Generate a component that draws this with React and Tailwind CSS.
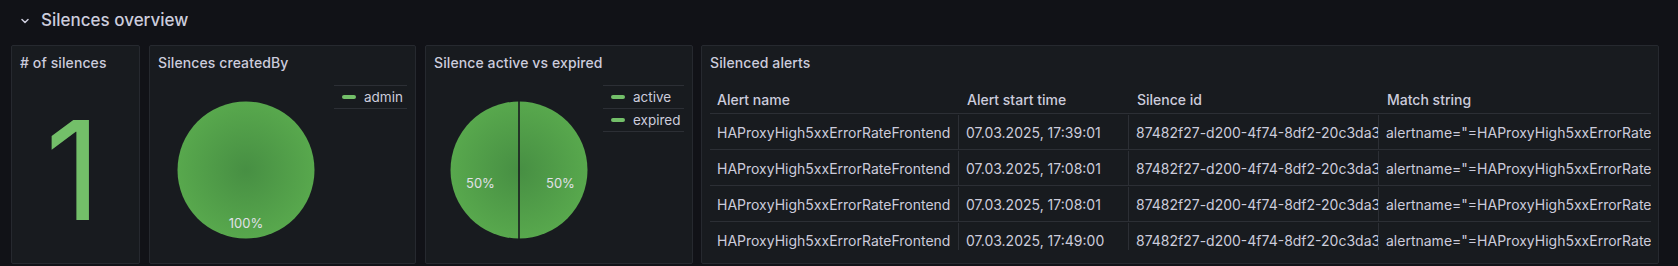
import React from "react";

const FONT = { fontFamily: "Inter, 'Noto Sans', sans-serif" };

function Panel({ title, className, children }) {
  return (
    <div className={"flex flex-col border border-[#26292f] bg-[#181b1f] rounded-[2px] h-[219px] " + className}>
      <div className="h-[32px] flex items-center px-[8px] text-[14px] font-medium text-[#ccccdc] tracking-[0.1px]">
        {title}
      </div>
      <div className="flex-1 min-h-0">{children}</div>
    </div>
  );
}

function Pie({ id, slices }) {
  const r = 68.5;
  const c = 70;
  return (
    <svg width="140" height="140" viewBox="0 0 140 140">
      <defs>
        <radialGradient id={id} cx="50%" cy="50%" r="50%">
          <stop offset="0%" stopColor="#478f43" />
          <stop offset="100%" stopColor="#58a84d" />
        </radialGradient>
      </defs>
      {slices === 1 ? (
        <circle cx={c} cy={c} r={r} fill={`url(#${id})`} />
      ) : (
        <g>
          <circle cx={c} cy={c} r={r} fill={`url(#${id})`} />
          <line x1={c} y1={c - r - 1} x2={c} y2={c + r + 1} stroke="#181b1f" strokeWidth="1.6" />
        </g>
      )}
    </svg>
  );
}

function Legend({ items, width }) {
  return (
    <div className={"flex flex-col border-t border-[#2c2f35] " + width}>
      {items.map((t) => (
        <div key={t} className="h-[23px] flex items-center border-b border-[#2c2f35] pl-[8px] gap-[8px]">
          <span className="w-[14px] h-[4px] rounded-full bg-[#73bf69]" />
          <span className="text-[13.5px] text-[#ccccdc]">{t}</span>
        </div>
      ))}
    </div>
  );
}

const rows = [
  ["HAProxyHigh5xxErrorRateFrontend", "07.03.2025, 17:39:01"],
  ["HAProxyHigh5xxErrorRateFrontend", "07.03.2025, 17:08:01"],
  ["HAProxyHigh5xxErrorRateFrontend", "07.03.2025, 17:08:01"],
  ["HAProxyHigh5xxErrorRateFrontend", "07.03.2025, 17:49:00"],
];

export default function App() {
  return (
    <div style={FONT} className="w-[1678px] h-[266px] bg-[#111217] overflow-hidden">
      <div className="h-[45px] flex items-center pl-[21px] pb-[4px]">
        <svg width="8" height="6" viewBox="0 0 8 6" className="mr-[12px]">
          <path d="M1 1.5 L4 4.5 L7 1.5" fill="none" stroke="#ccccdc" strokeWidth="1.5" strokeLinecap="round" strokeLinejoin="round" />
        </svg>
        <span className="text-[17px] font-medium text-[#ccccdc]">Silences overview</span>
      </div>
      <div className="flex pl-[11px]">
        <Panel title="# of silences" className="w-[129px]">
          <div className="h-full flex items-center justify-center">
            <span className="text-[137px] leading-none text-[#73bf69] font-normal pr-[5px]">1</span>
          </div>
        </Panel>
        <Panel title="Silences createdBy" className="w-[267px] ml-[9px]">
          <div className="h-full flex px-[8px] pt-[7px] pb-[8px]">
            <div className="flex-1 relative flex items-center justify-center">
              <Pie id="g1" slices={1} />
              <span className="absolute left-1/2 top-[129px] -translate-x-1/2 text-[13px] text-[#e0e0e8]">100%</span>
            </div>
            <div>
              <Legend items={["admin"]} width="w-[73px]" />
            </div>
          </div>
        </Panel>
        <Panel title="Silence active vs expired" className="w-[268px] ml-[9px]">
          <div className="h-full flex px-[8px] pt-[7px] pb-[8px]">
            <div className="flex-1 relative flex items-center justify-center">
              <Pie id="g2" slices={2} />
              <span className="absolute left-[32px] top-[89px] text-[13px] text-[#e0e0e8]">50%</span>
              <span className="absolute left-[112px] top-[89px] text-[13px] text-[#e0e0e8]">50%</span>
            </div>
            <div>
              <Legend items={["active", "expired"]} width="w-[81px]" />
            </div>
          </div>
        </Panel>
        <Panel title="Silenced alerts" className="w-[958px] ml-[8px]">
          <div className="px-[8px]">
            <div className="w-[941px] h-[172px] overflow-hidden">
              <div className="flex h-[36px] items-center pt-[8px] border-b border-[#2c2f35] text-[14px] font-medium text-[#ccccdc]">
                <div className="w-[250px] pl-[7px]">Alert name</div>
                <div className="w-[170px] pl-[7px]">Alert start time</div>
                <div className="w-[250px] pl-[7px]">Silence id</div>
                <div className="flex-1 pl-[7px]">Match string</div>
              </div>
              {rows.map((r, i) => (
                <div key={i} className="flex h-[36px] pt-[1px] border-b border-[#2c2f35] text-[14px] text-[#ccccdc]">
                  <div className="w-[249px] shrink-0 border-r border-[#2c2f35] pl-[7px] flex items-center overflow-hidden whitespace-nowrap">{r[0]}</div>
                  <div className="w-[170px] shrink-0 border-r border-[#2c2f35] pl-[7px] flex items-center overflow-hidden whitespace-nowrap">{r[1]}</div>
                  <div className="w-[250px] shrink-0 border-r border-[#2c2f35] pl-[7px] flex items-center overflow-hidden whitespace-nowrap">
                    <span className="block overflow-hidden">87482f27-d200-4f74-8df2-20c3da3b61e0</span>
                  </div>
                  <div className="flex-1 min-w-0 pl-[7px] flex items-center overflow-hidden whitespace-nowrap">
                    <span className="block overflow-hidden">alertname="=HAProxyHigh5xxErrorRateFrontend"</span>
                  </div>
                </div>
              ))}
            </div>
          </div>
        </Panel>
      </div>
    </div>
  );
}
